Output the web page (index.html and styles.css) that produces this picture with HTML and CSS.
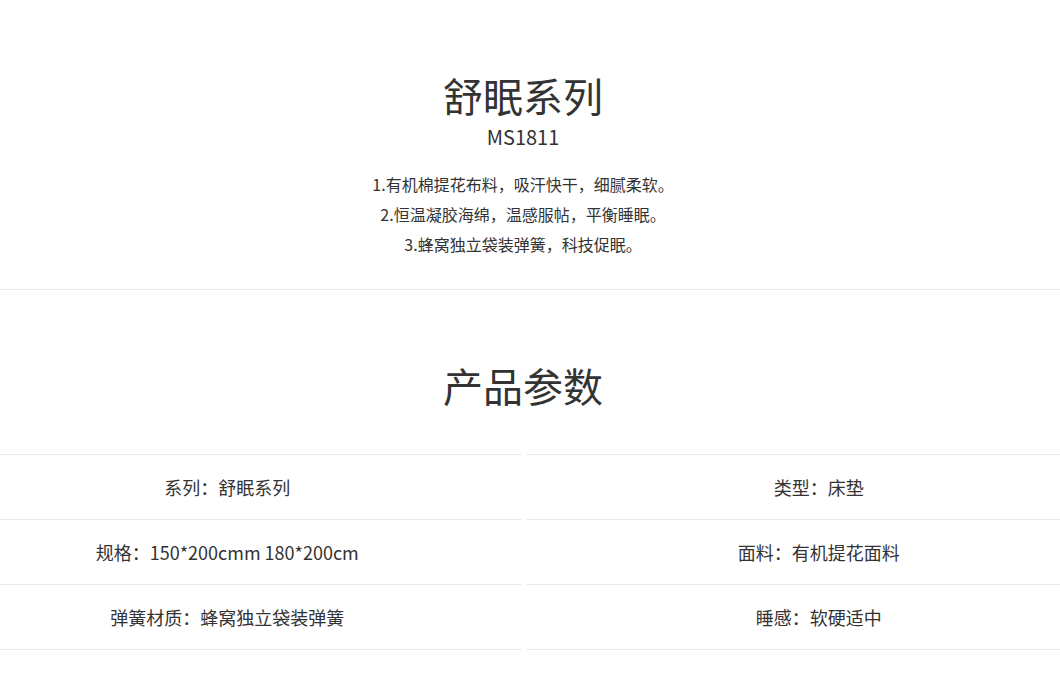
FILE: index.html
```html
<!DOCTYPE html>
<html lang="zh-CN">
<head>
    <meta charset="UTF-8">
    <meta name="viewport" content="width=device-width, initial-scale=1.0">
    <title>舒眠系列 MS1811</title>
    <link rel="stylesheet" href="styles.css">
</head>
<body>
    <div class="page">
        <div class="intro">
            <div class="wrap">
                <h1>舒眠系列</h1>
                <h2>MS1811</h2>
                <div class="desc">
                    <p>1.有机棉提花布料，吸汗快干，细腻柔软。</p>
                    <p>2.恒温凝胶海绵，温感服帖，平衡睡眠。</p>
                    <p>3.蜂窝独立袋装弹簧，科技促眠。</p>
                </div>
            </div>
        </div>
        <div class="params">
            <div class="wrap">
                <h1>产品参数</h1>
            </div>
            <ul class="param-list">
                <li>系列：舒眠系列</li>
                <li>类型：床垫</li>
                <li>规格：150*200cmm 180*200cm</li>
                <li>面料：有机提花面料</li>
                <li>弹簧材质：蜂窝独立袋装弹簧</li>
                <li>睡感：软硬适中</li>
            </ul>
        </div>
    </div>
</body>
</html>
```

FILE: styles.css
```css
body {
    margin: 0;
    padding: 0;
    background-color: #ffffff;
    color: #333333;
    font-family: "Noto Sans CJK SC", "Noto Sans", sans-serif;
    overflow-x: hidden;
}
h1, h2, p, ul {
    margin: 0;
    padding: 0;
}
.wrap {
    width: 1046px;
    text-align: center;
}
.intro {
    padding: 71px 0 30px;
    border-bottom: 1px solid #ebebeb;
}
.intro h1,
.params h1 {
    font-size: 40px;
    line-height: 48px;
    font-weight: normal;
    color: #333333;
}
.intro h2 {
    font-size: 20px;
    line-height: 28px;
    font-weight: normal;
    margin-top: 4px;
}
.desc {
    margin-top: 18px;
    font-size: 16px;
    line-height: 30px;
}
.params {
    padding-top: 71px;
}
.param-list {
    list-style: none;
    margin: 45px -52px 0 -66px;
    display: grid;
    grid-template-columns: 1fr 1fr;
    column-gap: 5px;
    text-align: center;
}
.param-list li {
    height: 64px;
    line-height: 64px;
    font-size: 18px;
    border-top: 1px solid #ebebeb;
}
.param-list li:nth-last-child(-n+2) {
    border-bottom: 1px solid #ebebeb;
}
```
